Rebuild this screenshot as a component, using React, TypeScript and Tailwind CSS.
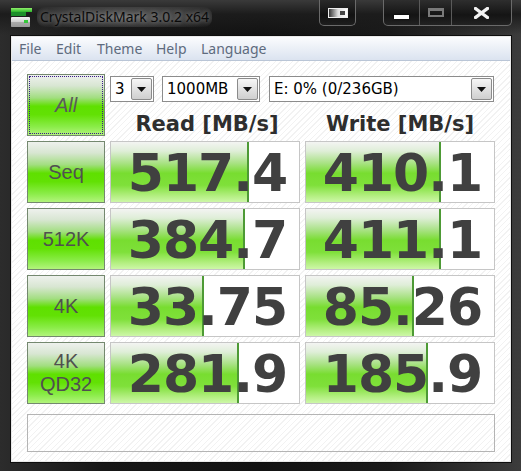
import React from "react";

type Row = { label: React.ReactNode; read: string; rw: number; write: string; ww: number };

const rows: Row[] = [
  { label: <span className="font-['Liberation_Sans',sans-serif] text-[20px]">Seq</span>, read: "517.4", rw: 138, write: "410.1", ww: 135 },
  { label: <span className="font-['Liberation_Sans',sans-serif] text-[20px]">512K</span>, read: "384.7", rw: 134, write: "411.1", ww: 135 },
  { label: <span className="font-['Liberation_Sans',sans-serif] text-[20px]">4K</span>, read: "33.75", rw: 93, write: "85.26", ww: 108 },
  {
    label: (
      <span className="flex flex-col items-center font-['Liberation_Sans',sans-serif] text-[20px] leading-[23px]">
        <span>4K</span>
        <span>QD32</span>
      </span>
    ),
    read: "281.9",
    rw: 128,
    write: "185.9",
    ww: 122,
  },
];

function GreenButton({ children, focus }: { children: React.ReactNode; focus?: boolean }) {
  return (
    <div className="relative w-[78px] h-[62px] shrink-0 border border-[#74886f] bg-[linear-gradient(to_bottom,#eef1ed_0%,#d8e6d2_18%,#a2de80_38%,#5fe000_52%,#62e104_66%,#8aec48_86%,#b2f47c_100%)] flex items-center justify-center text-[#505050]">
      {focus && <div className="absolute inset-[1px] border border-dotted border-[#3a1a8a]" />}
      {children}
    </div>
  );
}

function Cell({ value, fill }: { value: string; fill: number }) {
  return (
    <div className="relative h-[62px] flex-1 border border-[#c6c6c6] bg-white">
      <div
        className="absolute left-0 top-0 bottom-0 border-r-2 border-[#4d9a35] bg-[linear-gradient(to_bottom,#f3f4f2_0%,#dfeed8_15%,#a9e285_35%,#78dd30_52%,#7fe03a_72%,#b4ef82_90%,#cdf7a8_100%)]"
        style={{ width: fill }}
      />
      <div className="relative top-[1px] h-[60px] text-center pl-[5px] font-['DejaVu_Sans',sans-serif] font-bold text-[52px] leading-[60px] tracking-[-1px] text-[#404040] whitespace-nowrap">
        {value}
      </div>
    </div>
  );
}

function Combo({ w, text }: { w: string; text: string }) {
  return (
    <div className={`${w} h-[26px] shrink-0 border border-[#8c8c8c] bg-white flex items-center`}>
      <span className="flex-1 pl-[4px] font-['DejaVu_Sans',sans-serif] text-[15px] leading-[20px] text-black whitespace-nowrap">{text}</span>
      <div className="w-[21px] h-[22px] mr-[1px] border border-[#8b8b8b] rounded-[2px] bg-[linear-gradient(to_bottom,#f6f6f6,#e2e2e2_50%,#cfcfcf)] flex items-center justify-center">
        <svg width="9" height="5" viewBox="0 0 9 5">
          <path d="M0 0 H9 L4.5 5 Z" fill="#111" />
        </svg>
      </div>
    </div>
  );
}

function AppIcon() {
  return (
    <svg width="22" height="20" viewBox="0 0 22 20">
      <defs>
        <linearGradient id="g1" x1="0" y1="0" x2="0" y2="1">
          <stop offset="0" stopColor="#8ff06a" />
          <stop offset="1" stopColor="#2bb62b" />
        </linearGradient>
        <linearGradient id="g2" x1="0" y1="0" x2="0" y2="1">
          <stop offset="0" stopColor="#f4f4f4" />
          <stop offset="1" stopColor="#a9a9a9" />
        </linearGradient>
      </defs>
      <rect x="0" y="0" width="21" height="4" fill="url(#g1)" />
      <rect x="0" y="4" width="15" height="4" fill="#1d8f2b" />
      <rect x="0" y="9" width="19" height="10" rx="1" fill="url(#g2)" />
      <rect x="0" y="14" width="19" height="5" fill="#8a8a8a" opacity="0.5" />
      <rect x="13" y="12" width="4" height="3" fill="#35c83a" />
    </svg>
  );
}

export default function App() {
  return (
    <div className="w-[521px] h-[471px] overflow-hidden flex flex-col bg-[linear-gradient(to_right,#2c2c2c_0%,#161616_20%,#121212_50%,#1a1a1a_75%,#3c3c3c_100%)]">
      {/* title bar */}
      <div className="h-[35px] shrink-0 flex items-start bg-[linear-gradient(to_bottom,#3a3a3a_0%,#1c1c1c_40%,transparent_100%)]">
        <div className="ml-[11px] mt-[8px]">
          <AppIcon />
        </div>
        <div className="ml-[4px] mt-[7px] px-[3px] rounded-[8px] bg-[radial-gradient(ellipse_at_center,rgba(160,160,160,0.55)_0%,rgba(120,120,120,0.35)_60%,rgba(80,80,80,0)_100%)] font-['Noto_Sans',sans-serif] text-[14px] leading-[20px] text-[#0a0a0a] [text-shadow:0_0_4px_rgba(255,255,255,0.35)]">
          CrystalDiskMark 3.0.2 x64
        </div>
        <div className="flex-1" />
        <div className="w-[37px] h-[26px] border border-t-0 border-[#6a6a6a] rounded-b-[5px] bg-[linear-gradient(to_bottom,#2a2a2a,#111_60%,#1e1e1e)] flex items-center justify-center">
          <svg width="20" height="10" viewBox="0 0 20 10">
            <defs>
              <linearGradient id="dw" x1="0" y1="0" x2="1" y2="0">
                <stop offset="0" stopColor="#222" />
                <stop offset="0.5" stopColor="#ddd" />
                <stop offset="1" stopColor="#fff" />
              </linearGradient>
            </defs>
            <rect x="0" y="0" width="20" height="10" fill="url(#dw)" />
            <rect x="0.5" y="0.5" width="19" height="9" fill="none" stroke="#eee" />
            <rect x="12" y="3" width="5" height="4" fill="#444" />
          </svg>
        </div>
        <div className="ml-[27px] mr-[9px] flex h-[26px] border border-t-0 border-[#6a6a6a] rounded-b-[5px] overflow-hidden bg-[linear-gradient(to_bottom,#2e2e2e,#141414_60%,#222)]">
          <div className="w-[36px] h-full border-r border-[#5a5a5a] flex items-end justify-center pb-[6px]">
            <div className="w-[15px] h-[4px] bg-white shadow-[0_0_2px_#000]" />
          </div>
          <div className="w-[32px] h-full border-r border-[#5a5a5a] flex items-center justify-center">
            <div className="w-[16px] h-[9px] border-[2px] border-t-[3px] border-[#7a7a7a]" />
          </div>
          <div className="w-[59px] h-full flex items-center justify-center">
            <svg width="15" height="12" viewBox="0 0 15 12">
              <path d="M1.5 1.5 L13.5 10.5 M13.5 1.5 L1.5 10.5" stroke="#f2f2f2" strokeWidth="3.4" strokeLinecap="square" />
            </svg>
          </div>
        </div>
      </div>

      {/* client */}
      <div className="ml-[10px] mr-[9px] h-[428px] border border-[#0e0e0e] bg-[#e9e9e9] p-px">
        <div className="h-full flex flex-col bg-[repeating-linear-gradient(135deg,#ffffff_0px,#ffffff_3px,#f2f2f2_3px,#f2f2f2_4px)]">
          {/* menu */}
          <div className="h-[24px] shrink-0 flex items-center pl-[7px] border-b border-[#b9c5d6] bg-[linear-gradient(to_bottom,#fbfcfe_0%,#eef2f8_40%,#dbe3f0_100%)] font-['Noto_Sans',sans-serif] text-[14px] text-[#5e6b7e]">
            <span className="w-[37px]">File</span>
            <span className="w-[41px]">Edit</span>
            <span className="w-[59px]">Theme</span>
            <span className="w-[45px]">Help</span>
            <span>Language</span>
          </div>

          <div className="pl-[15px] pt-[13px]">
            <div className="flex gap-[5px]">
              <GreenButton focus>
                <span className="italic font-['Liberation_Sans',sans-serif] text-[20px] text-[#5a5a5a]">All</span>
              </GreenButton>
              <div className="flex flex-col w-[384px]">
                <div className="flex mt-[2px] h-[26px]">
                  <Combo w="w-[44px]" text="3" />
                  <div className="w-[8px]" />
                  <Combo w="w-[98px]" text="1000MB" />
                  <div className="w-[9px]" />
                  <Combo w="w-[225px]" text="E: 0% (0/236GB)" />
                </div>
                <div className="flex pt-[10px] font-['DejaVu_Sans',sans-serif] font-bold text-[21px] leading-[24px] text-[#2e2e2e]">
                  <div className="w-[192px] text-center pl-[2px]">Read [MB/s]</div>
                  <div className="w-[192px] text-center pl-[4px]">Write [MB/s]</div>
                </div>
              </div>
            </div>

            <div className="mt-[5px] flex flex-col gap-[5px]">
              {rows.map((r, i) => (
                <div key={i} className="flex gap-[5px] w-[468px]">
                  <GreenButton>{r.label}</GreenButton>
                  <Cell value={r.read} fill={r.rw} />
                  <Cell value={r.write} fill={r.ww} />
                </div>
              ))}
            </div>

            <div className="mt-[10px] w-[468px] h-[38px] border border-[#b4b4b4]" />
          </div>
        </div>
      </div>
    </div>
  );
}
